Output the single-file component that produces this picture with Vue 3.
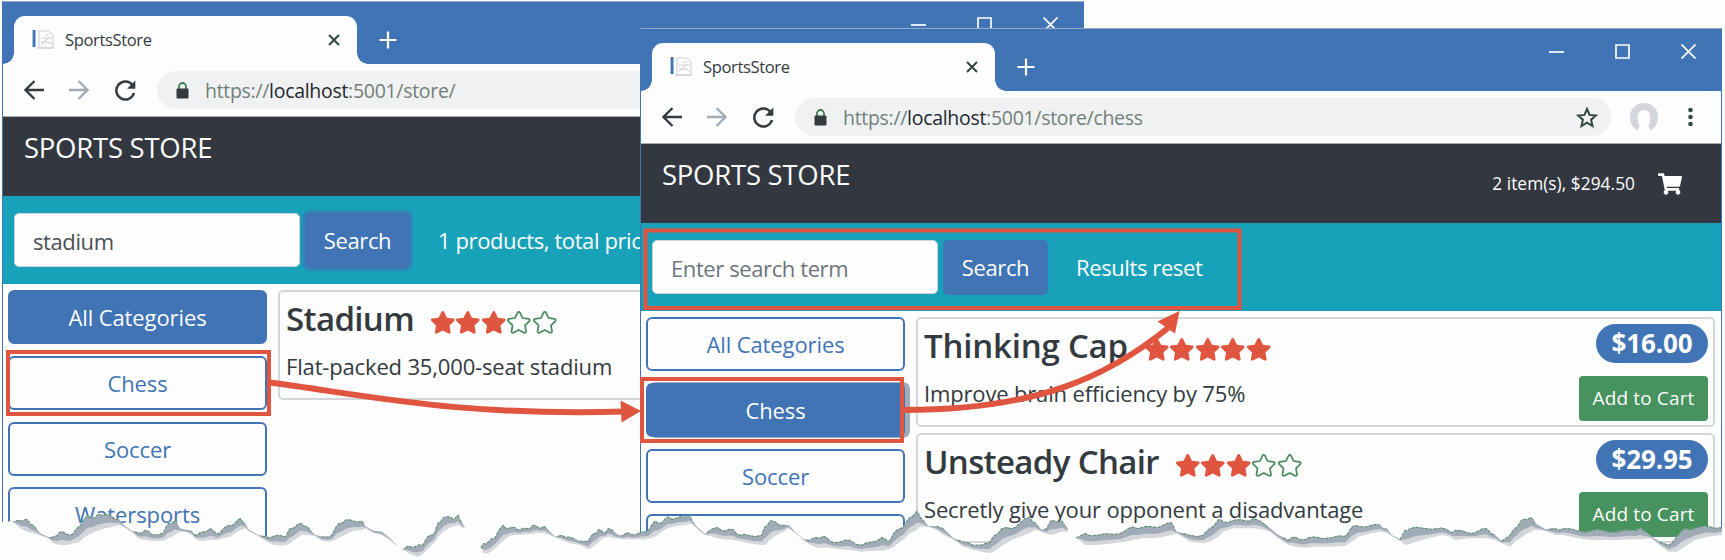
<script setup>
const windows = [
  {
    id: 'behind',
    path: '/store/',
    term: 'stadium',
    placeholder: '',
    focused: true,
    status: '1 products, total price',
    active: 'All Categories',
    categories: ['All Categories', 'Chess', 'Soccer', 'Watersports'],
    products: [
      { name: 'Stadium', text: 'Flat-packed 35,000-seat stadium', rating: 3, price: '', key: 'stadium' }
    ]
  },
  {
    id: 'front',
    path: '/store/chess',
    term: '',
    placeholder: 'Enter search term',
    focused: false,
    status: 'Results reset',
    cart: '2 item(s), $294.50',
    active: 'Chess',
    categories: ['All Categories', 'Chess', 'Soccer', ''],
    products: [
      { name: 'Thinking Cap', text: 'Improve brain efficiency by 75%', rating: 5, price: '$16.00', key: 'cap' },
      { name: 'Unsteady Chair', text: 'Secretly give your opponent a disadvantage', rating: 3, price: '$29.95', key: 'chair' }
    ]
  }
]

const starPath =
  'M259.3 17.8L194 150.2 47.9 171.5c-26.2 3.8-36.7 36.1-17.7 54.6l105.7 103-25 145.5c-4.5 26.3 23.2 46 46.4 33.7L288 439.6l130.7 68.7c23.2 12.2 50.9-7.4 46.4-33.7l-25-145.5 105.7-103c19-18.5 8.5-50.8-17.7-54.6L382 150.2 316.7 17.8c-11.7-23.6-45.6-23.9-57.4 0z'

// Torn paper ridges: [x, top, bottom] in thirds of a pixel, y measured from 280.
const ridges = [
  [[36,724,724],[60,720,745],[75,718,752],[85,722,756],[100,735,760],[120,760,765],[145,772,775],[160,770,790],[180,755,795],[200,762,795],[220,760,790],[235,740,788],[250,720,775],[265,708,765],[285,712,755],[300,702,750],[315,702,745],[340,712,740],[355,715,735],[370,735,740],[395,752,755],[415,758,775],[435,750,780],[455,762,783],[490,758,782],[505,730,775],[525,720,765],[540,745,755],[560,750,757],[575,752,765],[590,765,780],[610,755,783],[630,745,780],[650,762,780],[670,745,775],[690,735,770],[705,728,760],[722,715,750],[735,728,745],[745,748,752],[775,765,768],[800,770,785],[820,768,795],[850,768,797],[860,765,795],[870,745,790],[890,735,775],[905,730,765],[920,738,765],[945,765,768],[965,770,782],[990,770,785],[1005,745,780],[1020,728,772],[1035,720,765],[1060,722,752],[1085,722,750],[1098,740,745],[1120,752,760],[1145,755,765],[1170,775,780],[1190,795,797]],
  [[1207,808,808],[1225,797,820],[1250,798,830],[1265,795,826],[1275,782,815],[1290,765,800],[1305,755,785],[1315,728,770],[1330,712,755],[1355,712,740],[1365,715,738],[1375,705,735],[1385,725,742],[1395,745,745]],
  [[1443,803,803],[1450,790,820],[1465,785,820],[1480,775,810],[1490,762,800],[1510,735,782],[1525,745,770],[1545,742,765],[1560,748,765],[1585,745,762],[1598,735,762],[1615,742,758],[1632,738,760],[1650,755,765],[1665,770,772],[1685,765,780],[1710,770,790],[1740,783,795],[1765,783,808],[1780,760,800],[1797,748,785],[1810,758,775],[1825,745,770],[1845,758,775],[1870,765,778],[1885,758,778],[1910,762,778],[1935,755,778],[1950,745,775],[1965,722,770],[1985,728,755],[2005,710,745],[2025,715,738],[2055,710,735],[2065,706,732],[2075,718,732],[2090,740,745],[2115,762,765],[2130,750,768],[2155,742,775],[2175,752,778],[2200,748,780],[2220,765,783],[2245,765,790],[2285,765,795],[2295,740,795],[2310,722,780],[2330,728,765],[2350,735,755],[2365,735,745],[2385,755,758],[2410,778,780],[2430,780,795],[2450,772,803],[2470,768,803],[2490,782,803],[2520,785,808],[2550,780,810],[2585,795,815],[2615,785,813],[2645,772,812],[2665,785,808],[2680,760,802],[2700,745,785],[2715,732,775],[2730,712,760],[2750,693,750],[2760,710,740],[2785,738,740],[2810,738,750],[2830,745,765],[2860,775,778],[2890,785,800],[2920,795,810],[2970,785,820],[2985,765,812],[3005,745,798],[3035,745,780],[3060,728,770],[3088,710,760],[3105,728,750],[3125,750,755],[3140,745,762],[3155,720,765],[3185,722,755],[3203,745,755]],
  [[3228,773,773],[3255,760,795],[3290,765,795],[3340,762,790],[3375,752,785],[3400,740,780],[3425,742,775],[3460,740,775],[3490,735,770],[3515,728,765],[3530,755,760],[3570,765,785],[3610,765,790],[3630,745,785],[3655,718,770],[3670,725,755],[3700,720,745],[3740,722,745],[3760,715,745],[3795,733,750],[3810,745,756],[3835,765,775],[3865,780,795],[3885,770,800],[3915,778,803],[3945,770,800],[3995,772,800],[4035,768,798],[4055,740,785],[4075,738,770],[4115,735,760],[4140,735,755],[4160,745,758],[4175,765,768],[4200,778,782],[4215,750,795],[4230,745,792],[4265,743,780],[4325,743,765],[4350,755,770],[4365,750,780],[4405,758,775],[4435,752,775],[4460,745,775],[4485,765,780],[4505,783,790],[4530,765,800],[4545,745,785],[4560,725,775],[4575,717,765],[4592,711,755],[4605,730,750],[4635,748,752],[4665,745,765],[4690,745,765],[4735,752,775],[4775,752,780],[4805,750,780],[4855,755,780],[4895,750,778],[4920,743,778],[4955,770,775],[4980,785,797],[5005,795,815],[5030,770,815],[5055,745,800],[5085,745,780],[5125,738,770],[5165,742,765]]
]

// Adds small steps between the traced points so the edge reads as ragged paper.
const roughen = (points) => {
  const out = []
  points.forEach((p, i) => {
    out.push(p)
    const q = points[i + 1]
    if (!q) return
    const thick = Math.min(p[2] - p[1], q[2] - q[1])
    const wobble = thick > 12 ? (i % 2 ? 4 : -3) : 0
    out.push([(p[0] + q[0]) / 2, (p[1] + q[1]) / 2 + wobble, (p[2] + q[2]) / 2])
  })
  return out
}
const px = (x) => (x / 3).toFixed(1)
const py = (y) => (280 + y / 3).toFixed(1)
const rough = ridges.map(roughen)
const band = (points, k) =>
  'M' + points.map((p) => `${px(p[0])} ${py(p[1])}`).join('L') +
  'L' + [...points].reverse().map((p) => `${px(p[0])} ${py(p[1] + (p[2] - p[1]) * k)}`).join('L') + 'Z'
const crest = (points) =>
  points.map((p, i) => `${i && p[2] - p[1] > 13 ? 'L' : 'M'}${px(p[0])} ${py(p[1] + 1)}`).join('')
const paper =
  'M0 522L12 521.3L' + rough.flat().map((p) => `${px(p[0])} ${py((p[1] + p[2]) / 2)}`).join('L') + 'L1725 532V560H0Z'
</script>

<template>
  <main class="stage">
    <section v-for="w in windows" :key="w.id" class="window" :class="w.id">
      <header class="titlebar">
        <div class="tab">
          <svg class="favicon" width="23" height="22" viewBox="0 0 23 22">
            <path d="M2 1v17" stroke="#4074b5" stroke-width="3" />
            <path d="M0 1v17M5 19h17M7 2h9l5 4v13H7V2M13 6h4M9 9h11M9 13h7l4 2M9 16l8-8" stroke="#c9cdd3" fill="none" />
          </svg>
          <span class="tab-title">SportsStore</span>
          <svg class="tab-close" width="12" height="12" viewBox="0 0 12 12"><path d="M1 1l10 10M11 1L1 11" /></svg>
        </div>
        <svg class="plus" width="18" height="18" viewBox="0 0 18 18"><path d="M9 0.5v17M0.5 9h17" /></svg>
        <div class="controls">
          <svg width="15" height="15" viewBox="0 0 15 15"><path d="M0 8h15" /></svg>
          <svg width="15" height="15" viewBox="0 0 15 15"><path d="M1 1h13v13H1z" /></svg>
          <svg width="15" height="15" viewBox="0 0 15 15"><path d="M0.5 0.5l14 14M14.5 0.5l-14 14" /></svg>
        </div>
      </header>

      <div class="toolbar">
        <svg class="nav" width="20" height="20" viewBox="0 0 20 20"><path d="M20 10H2M10.5 1L1.5 10l9 9" /></svg>
        <svg class="nav dim" width="20" height="20" viewBox="0 0 20 20"><path d="M0 10h18M9.5 1l9 9-9 9" /></svg>
        <svg class="nav reload" width="21" height="21" viewBox="0 0 21 21">
          <path d="M17.6 5.2A9 9 0 1 0 19 13" />
          <path d="M20.3 0.5v8.2h-8.2z" class="solid" />
        </svg>
        <div class="address">
          <svg width="13" height="17" viewBox="0 0 13 17">
            <path d="M3 7V4.5a3.5 3.5 0 0 1 7 0V7" fill="none" stroke="#3f7a4e" stroke-width="1.8" />
            <rect x="0.5" y="6.5" width="12" height="10" rx="1" fill="#333a40" />
          </svg>
          <span class="url">https://<b>localhost</b>:5001{{ w.path }}</span>
          <svg class="bookmark" width="22" height="21" viewBox="0 0 22 21">
            <path d="M11 2l2.5 5.9 6.4.6-4.8 4.2 1.4 6.3L11 15.7 5.5 19l1.4-6.3L2.1 8.5l6.4-.6z" />
          </svg>
        </div>
        <svg class="avatar" width="28" height="28" viewBox="0 0 28 28">
          <path d="M7.5 27.2C3 25 0 20 0 14a14 14 0 0 1 28 0c0 6-3 11-7.5 13.2L18.5 23.5c0-2 1.5-3 1.8-8.5.2-5-2.3-8-6.3-8s-6.5 3-6.3 8c.3 5.5 1.8 6.5 1.8 8.5z" />
        </svg>
        <svg class="kebab" width="5" height="20" viewBox="0 0 5 20">
          <circle cx="2.5" cy="3" r="2.3" /><circle cx="2.5" cy="10" r="2.3" /><circle cx="2.5" cy="17" r="2.3" />
        </svg>
      </div>

      <div class="navbar">
        <span class="brand">SPORTS STORE</span>
        <template v-if="w.cart">
          <span class="summary">{{ w.cart }}</span>
          <svg class="cart" width="24" height="22" viewBox="0 0 576 512">
            <path d="M528.12 301.319l47.273-208C578.806 78.301 567.391 64 551.99 64H159.208l-9.166-44.81C147.758 8.021 137.93 0 126.529 0H24C10.745 0 0 10.745 0 24v16c0 13.255 10.745 24 24 24h69.883l70.248 343.435C147.325 417.1 136 435.222 136 456c0 30.928 25.072 56 56 56s56-25.072 56-56c0-15.674-6.447-29.835-16.824-40h209.647C430.447 426.165 424 440.326 424 456c0 30.928 25.072 56 56 56s56-25.072 56-56c0-22.172-12.888-41.332-31.579-50.405l5.517-24.276c3.413-15.018-8.002-29.319-23.403-29.319H218.117l-6.545-32h293.145c11.206 0 20.92-7.754 23.403-18.681z" />
          </svg>
        </template>
      </div>

      <div class="searchbar">
        <div class="field" :class="{ empty: !w.term }">{{ w.term || w.placeholder }}</div>
        <div class="search" :class="{ focused: w.focused }">Search</div>
        <span class="status">{{ w.status }}</span>
      </div>

      <div class="body">
        <nav class="categories">
          <div v-for="c in w.categories" :key="c" class="category" :class="{ active: c === w.active }">{{ c }}</div>
        </nav>
        <div class="products">
          <article v-for="p in w.products" :key="p.key" class="card" :class="p.key">
            <div class="row">
              <h2>{{ p.name }}</h2>
              <div class="stars">
                <svg v-for="n in 5" :key="n" width="25.5" height="22.7" viewBox="0 0 576 512">
                  <path :d="starPath" :class="n <= p.rating ? 'full' : 'hollow'" />
                </svg>
              </div>
              <span v-if="p.price" class="price">{{ p.price }}</span>
            </div>
            <div class="row second">
              <p>{{ p.text }}</p>
              <div v-if="p.price" class="add">Add to Cart</div>
            </div>
          </article>
        </div>
      </div>
    </section>

    <svg class="overlay" width="1725" height="560" viewBox="0 0 1725 560">
      <path :d="paper" fill="#fdfdfd" />
      <g v-for="(r, i) in rough" :key="i">
        <path :d="band(r, 1)" fill="#d3d7db" />
        <path :d="band(r, 0.62)" fill="#a2abb8" />
        <path :d="crest(r)" class="crest" />
      </g>
      <g class="marks">
        <rect x="8" y="352" width="261" height="62" />
        <rect x="642" y="379" width="260" height="62" />
        <rect x="645.5" y="230.5" width="594" height="77.5" />
        <path d="M270 382.5C372 396 455 416 625 411.5" class="arrow" />
        <path d="M904 410C1040 410 1110 375 1168 328" class="arrow" />
        <path d="M620.5 400.5L641 411L621.5 422.5z" class="head" />
        <path d="M1179.5 311L1157.5 321.5L1175 333.5z" class="head" />
      </g>
    </svg>
  </main>
</template>

<style>
body { background: #fdfdfd; }
</style>

<style scoped>
.stage {
  position: relative;
  width: 1725px;
  height: 560px;
  overflow: hidden;
  background: #fdfdfd;
  font-family: "Open Sans", "Noto Sans", sans-serif;
  font-size: 22px;
  letter-spacing: -0.4px;
  color: #333a40;
}
.stage * { box-sizing: border-box; }
.window {
  position: absolute;
  width: 1082px;
  height: 570px;
  overflow: hidden;
  display: flex;
  flex-direction: column;
  background: #fdfdfd;
  border: 1px solid #4074b5;
  border-top-color: #8fa9cc;
}
.behind { left: 2px; top: 1px; }
.front { left: 640px; top: 28px; }

.titlebar {
  flex: none;
  height: 62px;
  padding: 14px 20px 0 11px;
  display: flex;
  align-items: flex-start;
  background: #4074b5;
}
.tab {
  position: relative;
  width: 343px;
  height: 48px;
  padding: 0 17px 1px 18px;
  display: flex;
  align-items: center;
  background: #fdfdfd;
  border-radius: 11px 11px 0 0;
}
.tab::before,
.tab::after {
  content: "";
  position: absolute;
  bottom: 0;
  width: 11px;
  height: 11px;
}
.tab::before { left: -11px; background: radial-gradient(circle at 0 0, transparent 10.5px, #fdfdfd 11px); }
.tab::after { right: -11px; background: radial-gradient(circle at 100% 0, transparent 10.5px, #fdfdfd 11px); }
.tab-title { margin-left: 10px; font-size: 16.5px; letter-spacing: -0.35px; }
.tab-close { margin-left: auto; fill: none; stroke: #2f4a3c; stroke-width: 2; }
.plus { margin: 15px 0 0 22px; fill: none; stroke: #fdfdfd; stroke-width: 2.2; }
.controls { margin-left: auto; padding: 1px 5px 0 0; display: flex; gap: 51px; }
.controls svg { fill: none; stroke: #fdfdfd; stroke-width: 1.7; }

.toolbar {
  flex: none;
  height: 53px;
  padding: 0 28px 0 21px;
  display: flex;
  align-items: center;
  border-bottom: 1px solid #a8adb5;
}
.nav { margin-right: 25px; fill: none; stroke: #333a40; stroke-width: 2.3; }
.nav.dim { margin-right: 26px; stroke: #a2abb8; }
.nav.reload { margin-right: 21px; stroke-width: 2.5; }
.nav .solid { fill: #333a40; stroke: none; }
.address {
  width: 816px;
  height: 38px;
  padding: 0 13px 0 19px;
  display: flex;
  align-items: center;
  border-radius: 19px;
  background: #f0f1f2;
}
.url { margin-left: 16px; font-size: 19.5px; letter-spacing: -0.3px; color: #728078; }
.url b { font-weight: 400; color: #22282e; }
.bookmark { margin-left: auto; fill: none; stroke: #33473f; stroke-width: 2; }
.avatar { margin-left: 19px; fill: #d3d7db; }
.kebab { margin-left: auto; fill: #334840; }

.navbar {
  flex: none;
  height: 79px;
  padding: 0 39px 0 21px;
  display: flex;
  align-items: center;
  background: #333840;
  color: #fdfdfd;
}
.brand { margin-bottom: 19px; font-size: 27.5px; letter-spacing: -0.25px; }
.summary { margin-left: auto; font-size: 17.3px; letter-spacing: 0.05px; }
.cart { margin-left: 23px; fill: #fdfdfd; }

.searchbar {
  flex: none;
  height: 88px;
  padding: 0 11px;
  display: flex;
  align-items: center;
  background: #18a2b9;
  color: #fdfdfd;
  white-space: nowrap;
}
.field {
  width: 286px;
  height: 54px;
  padding-left: 18px;
  line-height: 55px;
  border: 1px solid #ced4da;
  border-radius: 5px;
  background: #fdfdfd;
  color: #495057;
}
.field.empty { color: #6c757d; }
.search {
  width: 105px;
  height: 55px;
  margin-left: 5px;
  line-height: 55px;
  text-align: center;
  border-radius: 5px;
  background: #4074b5;
}
.search.focused { box-shadow: 0 0 0 3px #2f87b8; }
.status { margin-left: 28px; }

.body { display: flex; padding: 6px 6px 0 5px; }
.categories { width: 259px; flex: none; display: flex; flex-direction: column; gap: 11.8px; }
.category {
  flex: none;
  height: 54px;
  line-height: 51px;
  text-align: center;
  border: 2px solid #4074b5;
  border-radius: 6px;
  color: #4074b5;
  letter-spacing: -0.1px;
}
.category.active { background: #4074b5; color: #fdfdfd; }
.front .category.active { box-shadow: 4px 0 0 1px #a2abb8; }
.products { flex: 1; margin-left: 11px; display: flex; flex-direction: column; gap: 6px; }
.card {
  height: 110px;
  padding: 5px 5px 0 6px;
  border: 2px solid #d3d7db;
  border-radius: 5px;
}
.row { display: flex; align-items: center; height: 39px; }
.row.second { height: 46px; margin-top: 12px; }
h2 { margin: 5px 0 0; font-size: 33px; font-weight: 600; line-height: 40px; letter-spacing: -0.65px; }
.cap h2 { letter-spacing: -0.2px; }
.stars { display: flex; margin: 11px 0 0 16px; }
.stars svg { overflow: visible; }
.full { fill: #e0553f; }
.hollow { fill: none; stroke: #4a8a60; stroke-width: 42; transform: translate(22px, 20px) scale(0.925); }
.price {
  margin-left: auto;
  width: 112px;
  height: 39px;
  line-height: 38px;
  text-align: center;
  border-radius: 20px;
  background: #4074b5;
  color: #fdfdfd;
  font-size: 26px;
  font-weight: 700;
  letter-spacing: -0.1px;
}
p { margin: -10px 0 0; letter-spacing: -0.16px; }
.add {
  margin-left: auto;
  width: 129px;
  height: 45px;
  line-height: 45px;
  text-align: center;
  border-radius: 4px;
  background: #47925e;
  color: #fdfdfd;
  font-size: 19px;
  letter-spacing: 0.15px;
}

.overlay { position: absolute; left: 0; top: 0; }
.crest { fill: none; stroke: #5d9470; stroke-width: 1.1; stroke-dasharray: 3 1.5; }
.marks { fill: none; stroke: #e0553f; stroke-width: 4; }
.marks .arrow { stroke-width: 6; }
.marks .head { fill: #e0553f; stroke: none; }
</style>
